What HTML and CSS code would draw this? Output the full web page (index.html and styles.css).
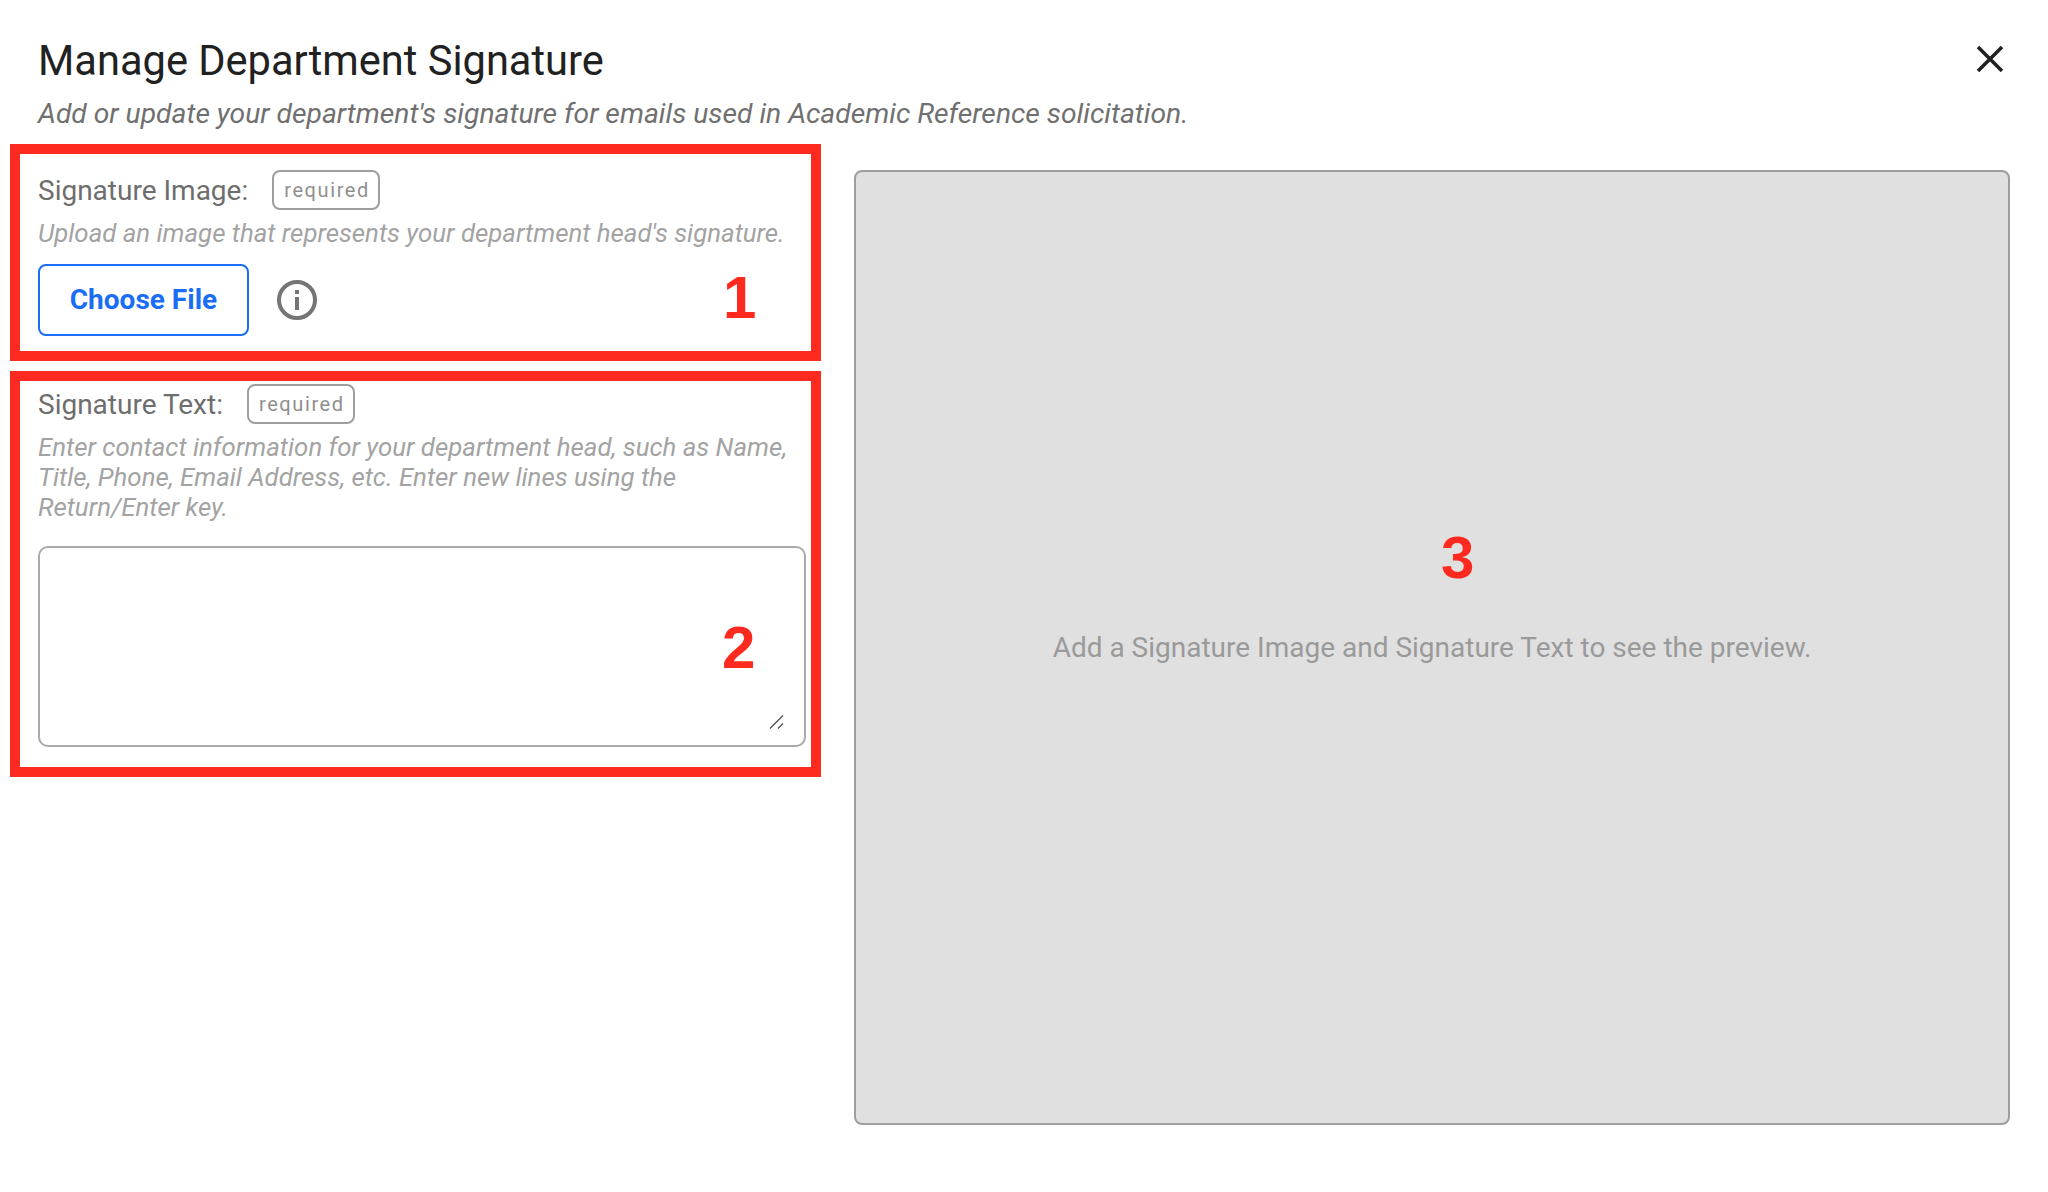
FILE: index.html
```html
<!DOCTYPE html>
<html lang="en">
<head>
<meta charset="utf-8">
<title>Manage Department Signature</title>
<link rel="stylesheet" href="styles.css">
</head>
<body>
<div class="dialog">
  <header class="head">
    <div class="head-text">
      <h1 class="title">Manage Department Signature</h1>
      <p class="subtitle">Add or update your department's signature for emails used in Academic Reference solicitation.</p>
    </div>
    <button class="close" aria-label="Close">
      <svg width="28" height="28" viewBox="0 0 28 28"><path d="M2 2 26 26M26 2 2 26" fill="none" stroke="#212121" stroke-width="3.6"/></svg>
    </button>
  </header>
  <div class="body">
    <div class="left">
      <section class="mark mark-image">
        <div class="label-row"><span class="label">Signature Image:</span><span class="tag tag-image">required</span></div>
        <p class="hint">Upload an image that represents your department head's signature.</p>
        <div class="file-row">
          <button class="choose">Choose File</button>
          <svg class="info" width="40" height="40" viewBox="0 0 40 40"><circle cx="20" cy="20" r="18" fill="none" stroke="#757575" stroke-width="4"/><rect x="18" y="10" width="4" height="4" fill="#757575"/><rect x="18" y="17" width="4" height="13" fill="#757575"/></svg>
        </div>
        <span class="num num-1">1</span>
      </section>
      <section class="mark mark-text">
        <div class="label-row"><span class="label">Signature Text:</span><span class="tag tag-text">required</span></div>
        <p class="hint hint-long">Enter contact information for your department head, such as Name, Title, Phone, Email Address, etc. Enter new lines using the Return/Enter key.</p>
        <div class="area-wrap">
          <textarea class="area"></textarea>
          <svg class="grip" width="15" height="14" viewBox="0 0 15 14"><path d="M1 13.5 14 .5M9 13.5 14 8.5" fill="none" stroke="#555" stroke-width="1.4"/></svg>
        </div>
        <span class="num num-2">2</span>
      </section>
    </div>
    <div class="preview">
      <p class="preview-text">Add a Signature Image and Signature Text to see the preview.</p>
      <span class="num num-3">3</span>
    </div>
  </div>
</div>
</body>
</html>
```
FILE: styles.css
```css
* { box-sizing: border-box; }
html, body { margin: 0; padding: 0; background: #fff; }
body { width: 2048px; height: 1192px; overflow: hidden; font-family: Roboto, "Liberation Sans", sans-serif; }
.dialog { padding: 33px 38px 0 10px; }
.head { display: flex; justify-content: space-between; align-items: flex-start; padding-left: 28px; height: 111px; }
.title { margin: 0; font-size: 41.6px; line-height: 56px; font-weight: 400; color: #212121; }
.subtitle { margin: 6px 0 0; font-size: 28.25px; line-height: 38px; font-style: italic; color: #707070; }
.close { border: 0; background: none; padding: 0; margin: 12px 6px 0 0; width: 28px; height: 28px; display: block; }
.close svg { display: block; }
.body { display: flex; gap: 33px; align-items: flex-start; }
.left { width: 811px; display: flex; flex-direction: column; gap: 10px; }
.mark { position: relative; border: 10px solid #ff2a1f; padding: 0 6px 0 18px; }
.mark-image { height: 217px; padding-top: 16px; }
.mark-text { height: 406px; padding-top: 3px; }
.label-row { display: flex; align-items: center; gap: 24px; height: 40px; }
.label { font-size: 28px; color: #6e6e6e; }
.tag { height: 40px; padding: 0 10px; border: 2px solid #9e9e9e; border-radius: 8px; font-size: 20px; line-height: 36px; letter-spacing: 1.6px; color: #8f8f8f; white-space: nowrap; text-align: center; }
.tag-image { width: 108px; }
.tag-text { width: 108px; }
.hint { margin: 8px 0 0; font-size: 25.8px; line-height: 30px; font-style: italic; color: #a3a3a3; }
.file-row { display: flex; align-items: center; gap: 28px; margin-top: 16px; }
.choose { width: 211px; height: 72px; padding: 0 0 2px; background: #fff; border: 2px solid #1a6ef5; border-radius: 8px; color: #1a6ef5; font: 700 28px Roboto, sans-serif; }
.info { display: block; }
.area-wrap { position: relative; margin-top: 24px; width: 768px; height: 201px; }
.area { display: block; width: 100%; height: 100%; resize: none; background: #fff; border: 2px solid #aaa; border-radius: 10px; outline: 0; }
.grip { position: absolute; right: 22px; bottom: 18px; }
.num { position: absolute; font: 700 60px/60px "Liberation Sans", Arial, sans-serif; color: #ff2a1f; }
.num-1 { left: 703px; top: 114px; }
.num-2 { left: 702px; top: 237px; }
.num-3 { left: 585px; top: 356px; }
.preview { position: relative; width: 1157px; height: 955px; margin-top: 26px; background: #e0e0e0; border: 2px solid #9e9e9e; border-radius: 8px; display: flex; align-items: center; justify-content: center; }
.preview-text { margin: 0; font-size: 28px; color: #9a9a9a; }
```
